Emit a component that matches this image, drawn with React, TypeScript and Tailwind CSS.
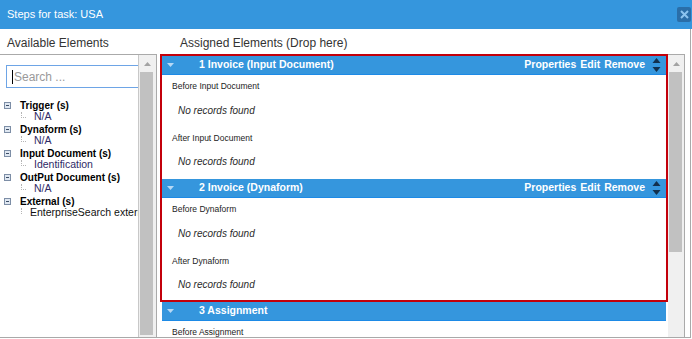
const font = "font-['Liberation_Sans',Arial,sans-serif]";

type TreeGroup = { label: string; child: string; childClass: string };

const groups: TreeGroup[] = [
  { label: "Trigger (s)", child: "N/A", childClass: "text-[#2e2a66]" },
  { label: "Dynaform (s)", child: "N/A", childClass: "text-[#2e2a66]" },
  { label: "Input Document (s)", child: "Identification", childClass: "text-[#2e2a66]" },
  { label: "OutPut Document (s)", child: "N/A", childClass: "text-[#2e2a66]" },
  { label: "External (s)", child: "EnterpriseSearch external", childClass: "text-[#111]" },
];

function MinusBox() {
  return (
    <div className="w-[7px] h-[7px] border border-[#7d8ea6] bg-[#dfe7f1] flex items-center justify-center">
      <div className="w-[3px] h-px bg-[#3b4d66]" />
    </div>
  );
}

function ScrollArrow() {
  return (
    <svg width="7" height="4" viewBox="0 0 7 4">
      <path d="M0 4 L3.5 0 L7 4 Z" fill="#a3a3a3" />
    </svg>
  );
}

function MoveArrows() {
  return (
    <svg width="9" height="16" viewBox="0 0 9 16">
      <path d="M0.5 6 L4.5 1 L8.5 6 Z" fill="#12304d" />
      <path d="M0.5 10 L4.5 15 L8.5 10 Z" fill="#12304d" />
    </svg>
  );
}

function SectionHeader({ title, actions }: { title: string; actions: boolean }) {
  return (
    <div className="h-[19px] bg-[#3596dd] border-b border-[#1d8ae6] flex items-center text-white font-bold text-[10.5px]">
      <svg width="7" height="4" viewBox="0 0 7 4" className="ml-[5px]">
        <path d="M0 0 L7 0 L3.5 4 Z" fill="#b7d9f5" />
      </svg>
      <span className="ml-[25px]">{title}</span>
      {actions && (
        <div className="ml-auto flex items-center gap-[4px] pr-[5px]">
          <span>Properties</span>
          <span>Edit</span>
          <span>Remove</span>
          <div className="ml-[3px]">
            <MoveArrows />
          </div>
        </div>
      )}
    </div>
  );
}

function Label({ text, className = "" }: { text: string; className?: string }) {
  return (
    <div className={`h-[22px] flex items-center pl-[10px] text-[8.5px] text-[#1c1c1c] ${className}`}>
      {text}
    </div>
  );
}

function NoRecords({ h }: { h: string }) {
  return (
    <div className={`${h} flex items-center pl-[16px] text-[10px] italic text-[#2a2a2a]`}>
      No records found
    </div>
  );
}

function Section({ n, name, kind, last }: { n: number; name: string; kind: string; last?: boolean }) {
  return (
    <div>
      <SectionHeader title={`${n} ${name} (${kind})`} actions />
      <div className={last ? "pb-[4px]" : "pb-[6px]"}>
        <Label text={`Before ${kind}`} />
        <NoRecords h="h-[26px]" />
        <Label text={`After ${kind}`} className="mt-[4px]" />
        <NoRecords h="h-[24px]" />
      </div>
    </div>
  );
}

export default function App() {
  return (
    <div className={`w-[692px] h-[339px] bg-white overflow-hidden ${font}`}>
      {/* title bar */}
      <div className="h-[29px] bg-[#3596dd] flex items-center pl-[7px] pr-px text-white text-[11px]">
        <span>Steps for task: USA</span>
        <div className="ml-auto w-[14px] h-[15px] bg-[#2a6ea8] rounded-[2px] flex items-center justify-center">
          <svg width="9" height="9" viewBox="0 0 9 9">
            <path d="M1 1 L8 8 M8 1 L1 8" stroke="#8cc4ef" strokeWidth="2" />
          </svg>
        </div>
      </div>

      <div className="w-[691px] h-[309px] border-r border-b border-[#a9a9a9] flex flex-col">
        <div className="h-[25px] flex items-center pt-[3px] text-[12px] text-[#333]">
          <span className="pl-[7px] w-[180px]">Available Elements</span>
          <span>Assigned Elements (Drop here)</span>
        </div>

        <div className="flex flex-1 min-h-0">
          {/* left panel */}
          <div className="w-[157px] border-t border-r border-[#aaa] flex">
            <div className="w-[139px] overflow-hidden pt-[10px]">
              <div className="ml-[6px] w-[150px] h-[23px] border border-[#6ea5e6] flex items-center pl-[5px] text-[12px] text-[#9a9a9a]">
                <div className="w-px h-[14px] bg-black mr-px" />
                Search ...
              </div>
              <div className="mt-[11px]">
                {groups.map((g) => (
                  <div key={g.label}>
                    <div className="h-[12px] flex items-center">
                      <div className="ml-[4px]">
                        <MinusBox />
                      </div>
                      <span className="ml-[9px] text-[10px] font-bold text-black whitespace-nowrap">{g.label}</span>
                    </div>
                    <div className="h-[12px] flex items-center">
                      <div className="ml-[21px] w-[5px] h-[6px] -mt-[4px] border-l border-b border-dotted border-[#b5b5b5]" />
                      <span className={`ml-[8px] text-[10.5px] whitespace-nowrap ${g.childClass}`}>{g.child}</span>
                    </div>
                  </div>
                ))}
              </div>
            </div>
            <div className="w-[18px] border-l border-[#c8c8c8] bg-[#f0f0f0] flex flex-col">
              <div className="h-[17px] flex items-center justify-center">
                <ScrollArrow />
              </div>
              <div className="ml-px w-[13px] h-[263px] bg-[#c1c1c1]" />
            </div>
          </div>

          <div className="w-[3px]" />

          {/* right panel */}
          <div className="w-[508px] overflow-hidden">
            <div className="border-2 border-[#c3000b]">
              <Section n={1} name="Invoice" kind="Input Document" />
              <Section n={2} name="Invoice" kind="Dynaform" last />
            </div>
            <div className="px-[2px]">
              <SectionHeader title="3 Assignment" actions={false} />
              <Label text="Before Assignment" />
            </div>
          </div>

          <div className="w-[17px] border-t border-r border-[#aaa] bg-[#f0f0f0] flex flex-col">
            <div className="h-[17px] flex items-center justify-center">
              <ScrollArrow />
            </div>
            <div className="ml-px w-[13px] h-[180px] bg-[#c1c1c1]" />
          </div>
        </div>
      </div>
    </div>
  );
}
